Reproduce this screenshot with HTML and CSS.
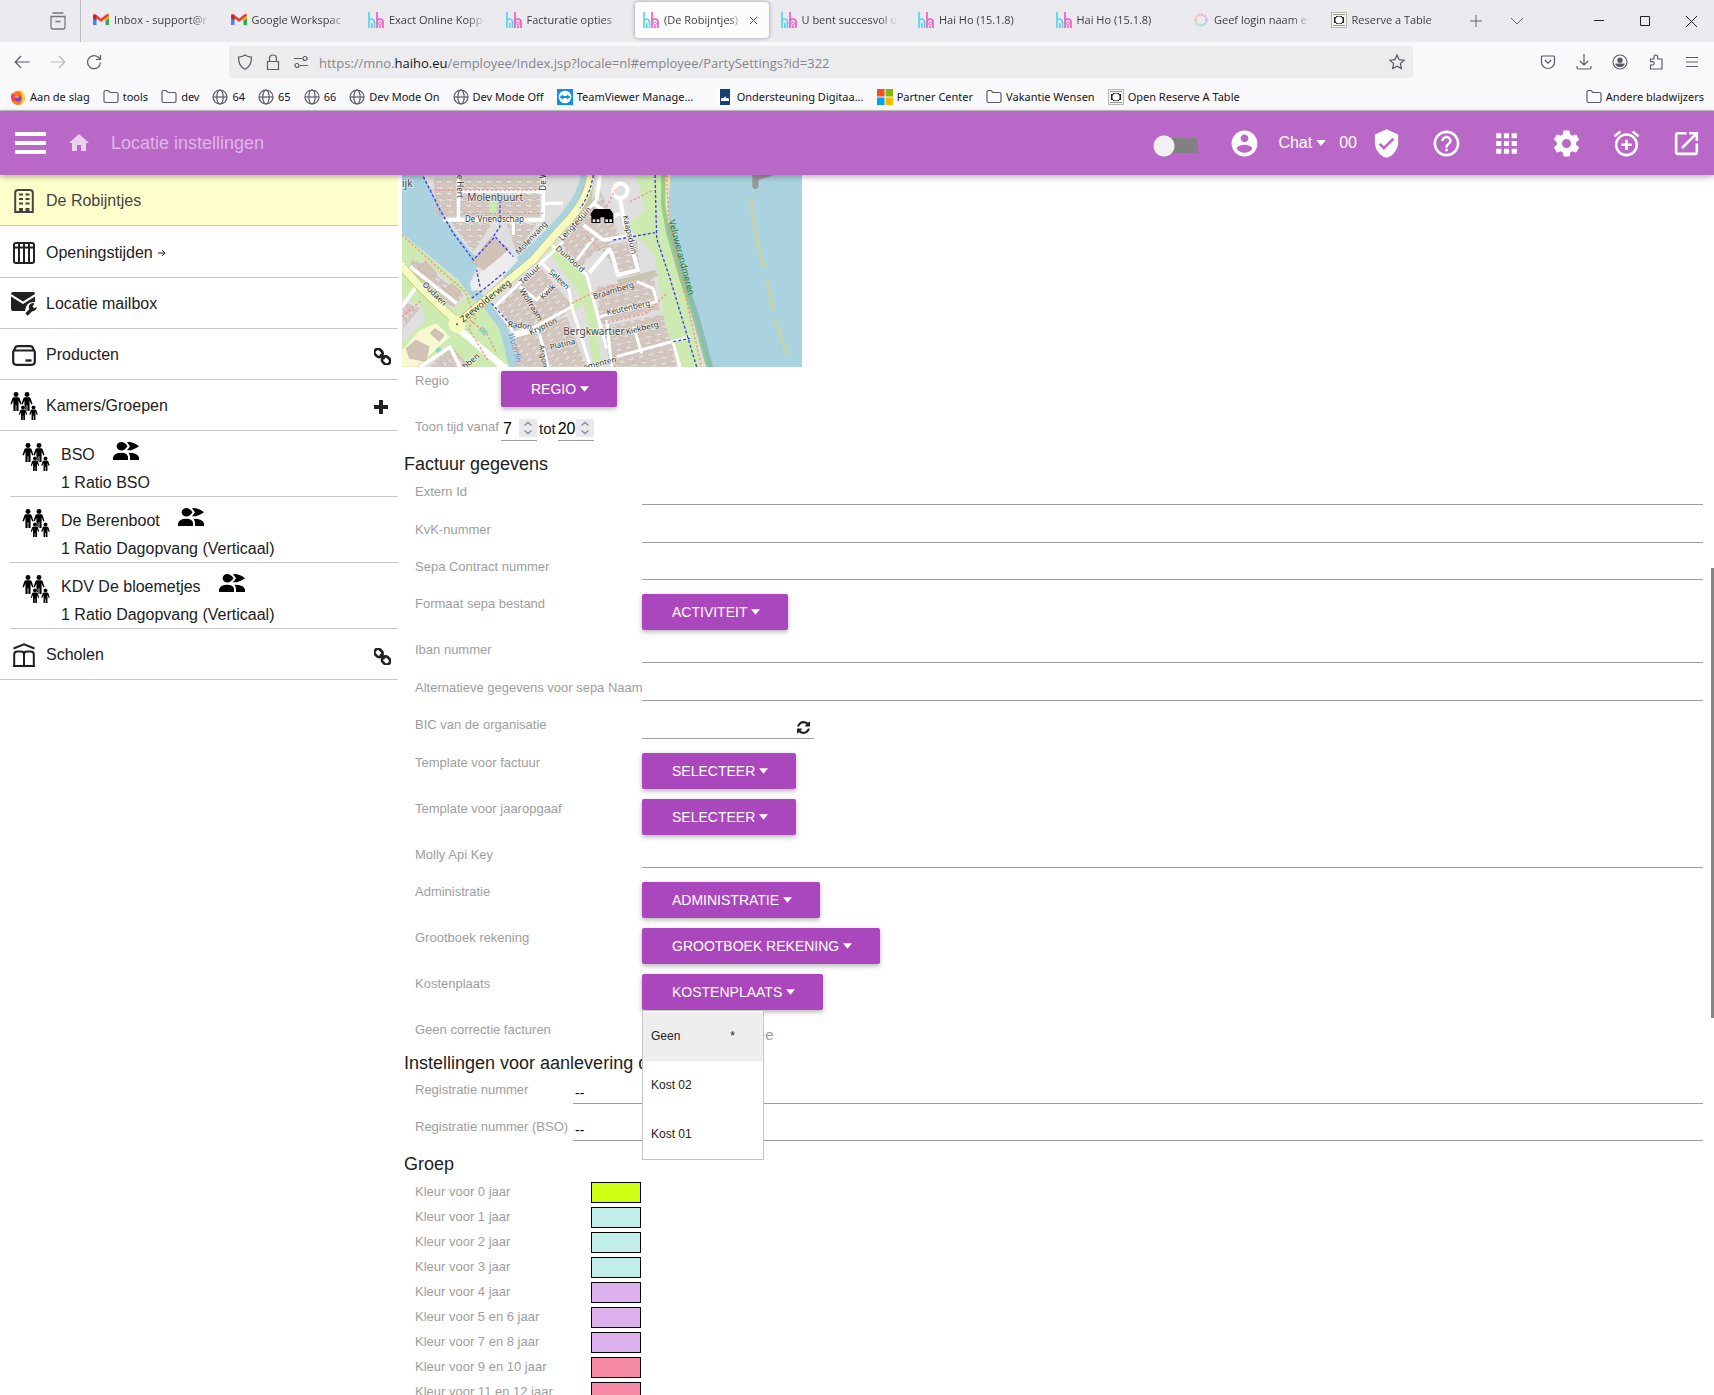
FILE: index.html
```html
<!DOCTYPE html>
<html lang="nl">
<head>
<meta charset="utf-8">
<title>Locatie instellingen</title>
<link rel="stylesheet" href="styles.css">
</head>
<body>
<svg class="sprite" aria-hidden="true">
  <symbol id="gmail" viewBox="0 0 16 16"><path d="M0 4v9h3.500V6z" fill="#4285f4"/><path d="M16 4v9h-3.500V6z" fill="#34a853"/><path d="M12.500 3.500 16 3v3l-3.500 3z" fill="#fbbc04"/><path d="M0 3.500C0 2 2 1.700 3.200 2.700L8 6.500l4.800-3.800C14 1.700 16 2 16 3.500L8 10z" fill="#ea4335"/><path d="M0 3.500v2.300l3.500 2.800V3z" fill="#c5221f"/></symbol>
  <symbol id="haiho" viewBox="0 0 16 16"><path d="M1 0v16M1 10q0-3 2.500-3T6.500 10v6M3.800 16v-5" fill="none" stroke="#52d6f2" stroke-width="1.700"/><path d="M9 0v16M9 10q0-3 3-3t3 3v6M12 16v-2" fill="none" stroke="#f25cc0" stroke-width="1.700"/><circle cx="12" cy="11.500" r="1.500" fill="none" stroke="#f25cc0"/></symbol>
  <symbol id="table" viewBox="0 0 16 16"><path fill="#b9b7ae" d="M0 0h16v16H0z"/><path fill="#f3f3ee" d="M1 1h14v14H1z"/><path fill="#222" d="M3 4h10v8H3z"/><path fill="#999" d="M2 2h12v1H2zM2 13h12v1H2z"/><circle cx="8" cy="8" r="3.600" fill="#fff"/><path fill="#fff" d="M3 4h2v1H3zM11 4h2v1h-2zM3 11h2v1H3zM11 11h2v1h-2z"/></symbol>
  <symbol id="folder" viewBox="0 0 16 16"><path d="M1 3q0-1.500 1.500-1.500H5l2 2h6.500Q15 3.500 15 5v7q0 1.500-1.500 1.500h-11Q1 13.500 1 12z" fill="none" stroke="#5b5b66" stroke-width="1.200"/></symbol>
  <symbol id="globe" viewBox="0 0 16 16"><g fill="none" stroke="#5b5b66" stroke-width="1.200"><circle cx="8" cy="8" r="7"/><ellipse cx="8" cy="8" rx="3.200" ry="7"/><path d="M1 8h14"/></g></symbol>
  <symbol id="caret" viewBox="0 0 8 5"><path d="M0 0h8L4 5z" fill="currentColor"/></symbol>
  <symbol id="person" viewBox="0 0 12 20"><circle cx="6" cy="2.600" r="2.600"/><path d="M4 5.500h4q1.500 0 2 1.500l1.800 5.500-1.300.6L8.700 9v11H6.400v-6h-.8v6H3.300V9l-1.800 4.100-1.300-.6L2 7q.5-1.500 2-1.500z"/></symbol>
  <symbol id="family" viewBox="0 0 28 28"><use href="#person" x="0" y="0" width="12" height="19"/><use href="#person" x="11" y="0" width="12" height="19"/><g stroke="#fff" stroke-width="1.500"><use href="#person" x="8.500" y="13.500" width="9" height="14.500"/><use href="#person" x="19" y="13.500" width="9" height="14.500"/></g><use href="#person" x="8.500" y="13.500" width="9" height="14.500"/><use href="#person" x="19" y="13.500" width="9" height="14.500"/></symbol>
  <symbol id="duo" viewBox="0 0 26 18"><path d="M3.500 4.200Q4.500 0 8.500 0q3 0 6 4.200-3 4.300-6 4.300-4 0-5-4.300zM14 .2q5-1 12 4-7 5-12 4l3-4zM0 18v-2.500Q1 11 8.500 10.800q5.500 0 6.500 4V18zM15.500 10.800q9.500 0 10.500 4.700V18h-9v-3q0-2-1.500-4.200z"/></symbol>
  <symbol id="chain" viewBox="0 0 16 16"><g fill="none" stroke="currentColor" stroke-width="2.500" transform="rotate(45 8 8)"><rect x="-1" y="5" width="8" height="6.500" rx="3"/><rect x="9" y="5" width="8" height="6.500" rx="3"/><path d="M5 8h6"/></g></symbol>
  <symbol id="updown" viewBox="0 0 18 18"><path d="M0 0h18v18H0z" fill="#e9e9ed"/><path d="m5.500 6.500 3.500-3 3.500 3M5.500 11.500l3.500 3 3.500-3" fill="none" stroke="#8f8f9d" stroke-width="1.500"/></symbol>
</svg>

<header class="browser">
  <div class="tabstrip">
    <button class="recent" aria-label="Recent"><svg width="16" height="18" viewBox="0 0 16 18"><g fill="none" stroke="#77777f" stroke-width="1.300"><path d="M2.500 1h11M1 4.500h14V15q0 2-2 2H3q-2 0-2-2zM5.500 9.500h5"/></g></svg></button>
    <nav class="tabs">
      <a class="tab" href="#"><svg class="fav"><use href="#gmail"/></svg><span>Inbox - support@r</span></a>
      <a class="tab" href="#"><svg class="fav"><use href="#gmail"/></svg><span>Google Workspac</span></a>
      <a class="tab" href="#"><svg class="fav"><use href="#haiho"/></svg><span>Exact Online Kopp</span></a>
      <a class="tab" href="#"><svg class="fav"><use href="#haiho"/></svg><span>Facturatie opties</span></a>
      <a class="tab active" href="#"><svg class="fav"><use href="#haiho"/></svg><span>(De Robijntjes)</span><svg class="x" viewBox="0 0 10 10"><path d="m1 1 8 8M9 1 1 9" stroke="#444" fill="none"/></svg></a>
      <a class="tab" href="#"><svg class="fav"><use href="#haiho"/></svg><span>U bent succesvol u</span></a>
      <a class="tab" href="#"><svg class="fav"><use href="#haiho"/></svg><span>Hai Ho (15.1.8)</span></a>
      <a class="tab" href="#"><svg class="fav"><use href="#haiho"/></svg><span>Hai Ho (15.1.8)</span></a>
      <a class="tab" href="#"><svg class="fav" viewBox="0 0 16 16"><g fill="none" stroke-width="2.500" stroke-dasharray="2 1" opacity=".6"><path d="M8 2.500A5.500 5.500 0 0 1 13.500 8" stroke="#e88be0"/><path d="M13.500 8A5.500 5.500 0 0 1 8 13.500" stroke="#8fb4f0"/><path d="M8 13.500A5.500 5.500 0 0 1 2.500 8" stroke="#8fdc9c"/><path d="M2.500 8A5.500 5.500 0 0 1 8 2.500" stroke="#f2a08a"/></g></svg><span>Geef login naam e</span></a>
      <a class="tab" href="#"><svg class="fav"><use href="#table"/></svg><span>Reserve a Table</span></a>
    </nav>
    <button class="newtab" aria-label="Nieuw tabblad"><svg width="12" height="12"><path d="M6 0v12M0 6h12" stroke="#666"/></svg></button>
    <button class="alltabs" aria-label="Alle tabbladen"><svg width="12" height="8"><path d="m0 1 6 6 6-6" fill="none" stroke="#666"/></svg></button>
    <div class="winbtns">
      <button aria-label="Minimaliseren"><svg width="10" height="10"><path d="M0 4.500h10" stroke="#222"/></svg></button>
      <button aria-label="Maximaliseren"><svg width="10" height="10"><path d="M.5.5h9v9h-9z" fill="none" stroke="#222"/></svg></button>
      <button aria-label="Sluiten"><svg width="11" height="11"><path d="m0 0 11 11M11 0 0 11" stroke="#222"/></svg></button>
    </div>
  </div>

  <div class="toolbar">
    <button class="tool" aria-label="Terug"><svg viewBox="0 0 16 16"><path d="M15.500 8H1.500M7 2 1.200 8 7 14"/></svg></button>
    <button class="tool dim" aria-label="Vooruit"><svg viewBox="0 0 16 16"><path d="M.5 8h14M9 2l5.800 6L9 14"/></svg></button>
    <button class="tool" aria-label="Vernieuwen"><svg viewBox="0 0 16 16"><path d="M14.500 8.500A6.500 6.500 0 1 1 12 3l2.500 2.300M14.500 1v4.500H10"/></svg></button>
    <div class="urlbar">
      <svg viewBox="0 0 16 16"><path d="M8 1c2 1.500 4 2 6.500 2.200C14.500 9 13 13 8 15.200 3 13 1.500 9 1.500 3.200 4 3 6 2.500 8 1z"/></svg>
      <svg viewBox="0 0 16 16"><path d="M2.500 7.500h11v8h-11zM4.500 7V4.500a3.500 3.500 0 0 1 7 0V7"/></svg>
      <svg viewBox="0 0 16 16"><path d="M1 4.500h8M15 11.500H7"/><circle cx="12" cy="4.500" r="2"/><circle cx="4" cy="11.500" r="2"/></svg>
      <p class="url">https://mno.<b>haiho.eu</b>/employee/Index.jsp?locale=nl#employee/PartySettings?id=322</p>
      <svg viewBox="0 0 16 16"><path d="m8 1 2.100 4.600 5 .6-3.700 3.400 1 5L8 12.200l-4.400 2.400 1-5L.9 6.200l5-.6z"/></svg>
    </div>
    <div class="tools">
      <button class="tool" aria-label="Pocket"><svg viewBox="0 0 16 16"><path d="M2.500 2h11q1 0 1 1v5a6.500 6.500 0 0 1-13 0V3q0-1 1-1zM4.800 6 8 9.200 11.200 6"/></svg></button>
      <button class="tool" aria-label="Downloads"><svg viewBox="0 0 16 16"><path d="M8 0v11M3.800 7 8 11l4.200-4M1 12v1.500Q1 15 2.500 15h11q1.500 0 1.500-1.500V12"/></svg></button>
      <button class="tool" aria-label="Account"><svg viewBox="0 0 16 16"><circle cx="8" cy="8" r="7"/><path d="M8 4a2.200 2.200 0 1 1 0 4.400A2.200 2.200 0 0 1 8 4zM4 10h8q-1 2.500-4 2.500T4 10z" fill="#5b5b66"/></svg></button>
      <button class="tool" aria-label="Extensies"><svg viewBox="0 0 16 16"><path d="M2.500 5H6V2.800a1.800 1.800 0 0 1 3.600 0V5h4.400v10H2.500v-4h2a1.600 1.600 0 0 0 0-3.300h-2z"/></svg></button>
      <button class="tool" aria-label="Menu"><svg viewBox="0 0 16 16"><path d="M2 3.500h12M2 8h12M2 12.500h12"/></svg></button>
    </div>
  </div>

  <nav class="bookmarks">
    <a href="#"><svg viewBox="0 0 16 16"><circle cx="8" cy="9" r="7" fill="#ff7a1a"/><path d="M9 0c2 2 6 4 6 9a7 7 0 0 1-6 7c4-3 5-8 0-16z" fill="#ffd23a"/><path d="M1.500 4 4 6l3-.5L4 13Q0 10 1.500 4z" fill="#ff3b5c"/><circle cx="8" cy="9.300" r="3.200" fill="#7a42d8"/><path d="M4.500 7q2-2 5 0L8 9H5z" fill="#ff9a2a"/></svg>Aan de slag</a>
    <a href="#"><svg><use href="#folder"/></svg>tools</a>
    <a href="#"><svg><use href="#folder"/></svg>dev</a>
    <a href="#"><svg><use href="#globe"/></svg>64</a>
    <a href="#"><svg><use href="#globe"/></svg>65</a>
    <a href="#"><svg><use href="#globe"/></svg>66</a>
    <a href="#"><svg><use href="#globe"/></svg>Dev Mode On</a>
    <a href="#"><svg><use href="#globe"/></svg>Dev Mode Off</a>
    <a class="capped" href="#"><svg viewBox="0 0 16 16"><path fill="#0e8ee9" d="M0 0h16v16H0z"/><circle cx="8" cy="8" r="6.300" fill="#fff"/><path d="m2.500 8 3.500-2.500V7h4V5.500L13.500 8 10 10.500V9H6v1.500z" fill="#0e8ee9"/></svg>TeamViewer Manage...</a>
    <a class="capped" href="#"><svg viewBox="0 0 16 16"><path fill="#fff" d="M0 0h16v16H0z"/><path fill="#154273" d="M3 0h10v16H3z"/><path fill="#fff" d="M4 12V9.500l1.500-.5L7 9l1-2 1 2 1.500 0 1.500.5V12z"/></svg>Ondersteuning Digitaa...</a>
    <a href="#"><svg viewBox="0 0 16 16"><path fill="#f25022" d="M0 0h7.500v7.500H0z"/><path fill="#7fba00" d="M8.500 0H16v7.500H8.500z"/><path fill="#00a4ef" d="M0 8.500h7.500V16H0z"/><path fill="#ffb900" d="M8.500 8.500H16V16H8.500z"/></svg>Partner Center</a>
    <a href="#"><svg><use href="#folder"/></svg>Vakantie Wensen</a>
    <a href="#"><svg><use href="#table"/></svg>Open Reserve A Table</a>
    <a class="other" href="#"><svg><use href="#folder"/></svg>Andere bladwijzers</a>
  </nav>
</header>

<div class="appbar">
  <button class="burger" aria-label="Menu"><svg width="31" height="22"><path d="M0 2h31M0 11h31M0 20h31" stroke="#fff" stroke-width="4"/></svg></button>
  <a class="home" href="#" aria-label="Home"><svg width="24" height="24" viewBox="0 0 24 24"><path fill="currentColor" d="M10 20v-6h4v6h5v-8h3L12 3 2 12h3v8z"/></svg></a>
  <h1>Locatie instellingen</h1>
  <label class="switch"><input type="checkbox" aria-label="Modus"></label>
  <a class="mi" href="#" aria-label="Account"><svg viewBox="0 0 24 24"><path d="M12 2C6.480 2 2 6.480 2 12s4.480 10 10 10 10-4.480 10-10S17.520 2 12 2zm0 3c1.660 0 3 1.340 3 3s-1.340 3-3 3-3-1.340-3-3 1.340-3 3-3zm0 14.200c-2.500 0-4.710-1.280-6-3.220.03-1.990 4-3.080 6-3.080 1.990 0 5.970 1.090 6 3.080-1.290 1.940-3.500 3.220-6 3.220z"/></svg></a>
  <button class="chat">Chat <svg width="10" height="6"><use href="#caret"/></svg></button>
  <span class="count">00</span>
  <nav class="actions">
    <a class="mi" href="#" aria-label="Beveiliging"><svg viewBox="0 0 24 24"><path d="M12 1L3 5v6c0 5.550 3.840 10.740 9 12 5.160-1.260 9-6.450 9-12V5l-9-4zm-2 16l-4-4 1.410-1.410L10 14.170l6.590-6.590L18 9l-8 8z"/></svg></a>
    <a class="mi" href="#" aria-label="Help"><svg viewBox="0 0 24 24"><path d="M11 18h2v-2h-2v2zm1-16C6.480 2 2 6.480 2 12s4.480 10 10 10 10-4.480 10-10S17.520 2 12 2zm0 18c-4.410 0-8-3.590-8-8s3.590-8 8-8 8 3.590 8 8-3.590 8-8 8zm0-14c-2.210 0-4 1.790-4 4h2c0-1.100.9-2 2-2s2 .9 2 2c0 2-3 1.750-3 5h2c0-2.250 3-2.500 3-5 0-2.210-1.790-4-4-4z"/></svg></a>
    <a class="mi" href="#" aria-label="Apps"><svg viewBox="0 0 24 24"><path d="M4 8h4V4H4v4zm6 12h4v-4h-4v4zm-6 0h4v-4H4v4zm0-6h4v-4H4v4zm6 0h4v-4h-4v4zm6-10v4h4V4h-4zm-6 4h4V4h-4v4zm6 6h4v-4h-4v4zm0 6h4v-4h-4v4z"/></svg></a>
    <a class="mi" href="#" aria-label="Instellingen"><svg viewBox="0 0 24 24"><path d="M19.430 12.980c.04-.32.07-.64.07-.98s-.03-.66-.07-.98l2.110-1.650c.19-.15.24-.42.12-.64l-2-3.460c-.12-.22-.39-.3-.61-.22l-2.490 1c-.52-.4-1.080-.73-1.690-.98l-.38-2.650C14.460 2.180 14.250 2 14 2h-4c-.25 0-.46.18-.49.42l-.38 2.650c-.61.25-1.170.59-1.690.98l-2.490-1c-.23-.09-.49 0-.61.22l-2 3.460c-.13.22-.07.49.12.64l2.110 1.650c-.04.32-.07.65-.07.98s.03.66.07.98l-2.110 1.650c-.19.15-.24.42-.12.64l2 3.460c.12.22.39.3.61.22l2.490-1c.52.4 1.080.73 1.690.98l.38 2.650c.03.24.24.42.49.42h4c.25 0 .46-.18.49-.42l.38-2.650c.61-.25 1.170-.59 1.690-.98l2.490 1c.23.09.49 0 .61-.22l2-3.460c.12-.22.07-.49-.12-.64l-2.110-1.650zM12 15.500c-1.930 0-3.500-1.570-3.500-3.500s1.570-3.500 3.500-3.500 3.500 1.570 3.500 3.500-1.570 3.500-3.500 3.500z"/></svg></a>
    <a class="mi" href="#" aria-label="Herinnering"><svg viewBox="0 0 24 24"><path d="M7.880 3.390L6.600 1.860 2 5.710l1.290 1.530 4.590-3.850zM22 5.720l-4.600-3.860-1.290 1.530 4.600 3.860L22 5.720zM12 4c-4.970 0-9 4.030-9 9s4.020 9 9 9c4.970 0 9-4.030 9-9s-4.030-9-9-9zm0 16c-3.870 0-7-3.130-7-7s3.130-7 7-7 7 3.130 7 7-3.130 7-7 7zm1-11h-2v3H8v2h3v3h2v-3h3v-2h-3V9z"/></svg></a>
    <a class="mi" href="#" aria-label="Openen"><svg viewBox="0 0 24 24"><path d="M19 19H5V5h7V3H5c-1.110 0-2 .9-2 2v14c0 1.100.89 2 2 2h14c1.100 0 2-.9 2-2v-7h-2v7zM14 3v2h3.590l-9.830 9.830 1.410 1.410L19 6.410V10h2V3h-7z"/></svg></a>
  </nav>
</div>

<div class="body">
  <nav class="side">
    <a class="item current" href="#"><span class="ico"><svg width="20" height="24" viewBox="0 0 20 24"><path d="M1.200 23V4q0-3 3-3h11.600q3 0 3 3v19z" fill="none" stroke="currentColor" stroke-width="2"/><path d="M5 5.500h4M11.500 5.500h4M5 10h4M11.500 10h4M5 14.500h4M11.500 14.500h4" stroke="currentColor" stroke-width="2"/><path d="M5 19h4v4H5zM11.500 19h4v4h-4z" fill="currentColor"/></svg></span>De Robijntjes</a>
    <a class="item hours" href="#"><span class="ico"><svg width="22" height="22" viewBox="0 0 22 22"><rect x="1" y="1" width="20" height="20" rx="2" fill="none" stroke="currentColor" stroke-width="2"/><path d="M1 5.500h20M6 1v20M11 1v20M16 1v20" stroke="currentColor" stroke-width="2"/></svg></span>Openingstijden <svg class="arrow" width="8" height="8" viewBox="0 0 8 8"><path d="M0 4h7M4 1l3 3-3 3" fill="none" stroke="currentColor"/></svg></a>
    <a class="item" href="#"><span class="ico"><svg width="26" height="24" viewBox="0 0 26 24"><path d="M0 2q0-2 2-2h20q2 0 2 2l-12 7.500zM0 4.500l12 7.500 12-7.500V10q-9-1-10 9H2q-2 0-2-2z" fill="currentColor"/><path d="m15.500 22.500 6-6" stroke="currentColor" stroke-width="3.500"/><path d="M23.500 11.500a4 4 0 1 0 2.300 3.500l-2.600 1.300-1.700-1.800z" fill="currentColor"/></svg></span>Locatie mailbox</a>
    <a class="item" href="#"><span class="ico"><svg width="24" height="21" viewBox="0 0 24 21"><path d="M1.200 7 3.500 2.300Q4 1.200 5.500 1.200h13q1.500 0 2 1.100L22.800 7v9.500q0 3.300-3 3.300H4.200q-3 0-3-3.300zM2 5.500h20" fill="none" stroke="currentColor" stroke-width="2.200"/><path d="M13.500 15.500h6" stroke="currentColor" stroke-width="2.400"/></svg></span>Producten<svg class="end" width="17" height="17"><use href="#chain"/></svg></a>
    <a class="item" href="#"><span class="ico"><svg width="28" height="28"><use href="#family"/></svg></span>Kamers/Groepen<svg class="end plus" width="17" height="15"><path d="M7 0v14M0 7h14" stroke="currentColor" stroke-width="4"/></svg></a>
    <ul class="rooms">
      <li><a href="#"><svg class="fam" width="28" height="28"><use href="#family"/></svg><span class="name">BSO</span><svg class="duo" width="26" height="18"><use href="#duo"/></svg><span class="ratio">1 Ratio BSO</span></a></li>
      <li><a href="#"><svg class="fam" width="28" height="28"><use href="#family"/></svg><span class="name">De Berenboot</span><svg class="duo" width="26" height="18"><use href="#duo"/></svg><span class="ratio">1 Ratio Dagopvang (Verticaal)</span></a></li>
      <li><a href="#"><svg class="fam" width="28" height="28"><use href="#family"/></svg><span class="name">KDV De bloemetjes</span><svg class="duo" width="26" height="18"><use href="#duo"/></svg><span class="ratio">1 Ratio Dagopvang (Verticaal)</span></a></li>
    </ul>
    <a class="item" href="#"><span class="ico"><svg width="22" height="24" viewBox="0 0 22 24"><path d="M.5 5.500 11 1.300l10.500 4.200" fill="none" stroke="currentColor" stroke-width="2"/><path d="M1.200 23V11.500q0-3 3-3H8q3 0 3 3V23zM11 23V11.500q0-3 3-3h3.800q3 0 3 3V23z" fill="none" stroke="currentColor" stroke-width="2"/><path d="M0 23h22" stroke="currentColor" stroke-width="2"/></svg></span>Scholen<svg class="end" width="17" height="17"><use href="#chain"/></svg></a>
  </nav>

  <main class="main">
    <svg class="map" viewBox="6 15 1200 576" role="img" aria-label="Kaart">
      <defs>
        <pattern id="houses" width="30" height="36" patternUnits="userSpaceOnUse"><path d="M2 3h8v-2h10v3h9v10h-11v3H9v-3H2zM3 22h14v-2h11v11H17v3H3z" fill="#d6c8be" stroke="#bda99d" stroke-width="1.500"/></pattern>
        <pattern id="housesA" href="#houses" patternTransform="rotate(-42)"/>
        <pattern id="housesB" href="#houses" patternTransform="rotate(-14)"/>
        <pattern id="housesC" href="#houses" patternTransform="rotate(40)"/>
      </defs>
      <path fill="#e0dfdf" d="M6 15h1200v576H6z"/>
      <path fill="#cdebb0" d="M6 190 100 270l130 110 60 60 60 150H6z"/>
      <path fill="#e0dfdf" d="M6 380l60 30 10 40-70 70zM30 280l40-10 130 110-40 40zM70 591l70-70 60 70z"/>
      <path fill="#f7f7d2" d="m60 480 50-20 40 40-100 90H6v-50z"/>
      <path fill="#aad3df" d="M6 15h62l50 90 45 80 50 60 28 25-28 60-8 25 20 40-50-65L6 190z"/>
      <path fill="none" stroke="#aad3df" stroke-width="26" d="M556 15q-10 60-60 120T370 262l-60 60M205 350l60 60 45 60 30 121"/>
      <path fill="url(#houses)" d="M100 25h320v115H110zM150 155l130 0-60 90zM320 160h90l-60 90z"/>
      <path fill="url(#housesA)" d="M480 210 600 60l60 140-90 60-40 50zM280 410l140-120 100 120-60 50-130 20zM350 500l150-60 60 150H350z"/>
      <path fill="url(#housesB)" d="M590 350l170-30 20 100-180 40zM610 470l190-40 30 160H630zM600 230l110-20 10 100-60 10z"/>
      <path fill="url(#housesC)" d="M10 395l50 20-50 60zM90 591l60-70 60 70zM40 265l150 110-30 40L20 300z"/>
      <g fill="#d1c2b8" stroke="#b9a79a"><path d="m215 275 60-75 50 35-60 75zM18 535l30-25 40 20-10 45-50-10zM125 365l30-25 30 25-30 30zM52 290l25-18 35 40-25 15zM90 490l15-15 28 20-15 20z"/></g>
      <path fill="#ededed" d="m210 335 110-90 35 25-80 85-60 8z"/>
      <path fill="#c8c5b0" d="m650 330 115-30 8 18-110 30zM555 30l25-15-5 110-40 30-20-10z"/>
      <path fill="#cdebb0" d="M708 15h82l2 110 12 70 46 150 55 246h-60l-50-130-30-200-50-60-30-40 50-40zM460 215l100 90 20 60 25 226h-25l-30-200-70-100-40-50zM268 92h22v40h-22zM510 400l60-30v20l-60 40z"/>
      <g fill="#88dcc0"><path d="m235 480 12-12 18 18-12 12zM105 540l12-10 10 12-12 10z"/></g>
      <path fill="#f8eaa8" d="M785 15h27l-9 50 1 60 14 90-12-20-14-80z"/>
      <path fill="#aad3df" d="M812 15h394v576H928l-43-151-35-110-38-150-8-70z"/>
      <path fill="none" stroke="#7cc47c" stroke-width="13" opacity=".75" d="M790 15v90l14 80 40 140 40 120 42 150"/>
      <path fill="none" stroke="#86b8b0" stroke-width="13" opacity=".8" d="m806 160 42 150 42 125 44 160"/>
      <g fill="none" stroke="#999" stroke-width="18" stroke-linecap="round"><path d="M1066 20v28M1066 24l45-15"/></g>
      <g fill="none" stroke="#c5d3a6" stroke-width="10" stroke-linecap="round"><path d="M1054 90q10 120 40 200M1102 330l16 90M1126 450l34 100"/></g>
      <g fill="none" stroke="#fff" stroke-width="12" stroke-linejoin="round">
        <path d="M6 280l50 60-50 70M30 290l140 110M60 591l90-60 30 60M180 480l150 120" stroke-width="11"/>
        <path d="M180 480 320 600" stroke-width="19"/>
        <path d="M130 150h45l255 0V15M175 15v135M180 65h245M428 100h60M340 150v45" stroke-width="10"/>
        <path d="M590 90l10-75M660 85q-25-5-20-25 8-25 28-18 20 8 12 30-8 14-20 13l12 65 42 150-60 15-18-62-8-15-60 70M550 165l60 45 90-15M580 100l60 40M660 130l-20 10"/>
        <path d="M490 215 285 410l60 80 60-20 112-60-10-50-80-80M360 350l50 40 40-40M517 415l55 176M455 225l105 90 60 220M530 270l50-65M600 440l170-45-10-40-50-20M620 450l15 140M650 560l220-60M340 500l75-20M820 520l20 70M700 470l25 80M415 480l30 110M590 90l-110 120" stroke-width="9"/>
      </g>
      <g fill="none" stroke="#b9b96f" stroke-width="26"><path d="M572 15q-5 70-70 140T400 270l-85 70-140 120L60 350 6 290"/></g>
      <g fill="none" stroke="#f7fabf" stroke-width="23"><path d="M572 15q-5 70-70 140T400 270l-85 70-140 120L60 350 6 290"/></g>
      <circle cx="171" cy="463" r="26" fill="#f7fabf"/><circle cx="171" cy="463" r="3" fill="#555"/>
      <g fill="none" stroke="#fa9088" stroke-width="4" stroke-dasharray="7 6"><path d="M6 195l110 100 80 70 30 80-20 30 60 100M90 60h330M190 130h240M690 95l70-35M800 15l5 120 30 150 70 306M610 460l130-30 60-60M515 400l60-30 90-30M620 110l25-50M560 200l40 40M6 440l60-50M210 450l50 40 30 60"/></g>
      <g fill="none" stroke="#3d3df0" stroke-width="4" stroke-dasharray="9 6"><path d="M70 20l50 100 40 70 60 80 65-70 55 60M300 90v80l-20 30M765 15l5 190 40 120 80 266M640 210l125-22M820 515l50-10M240 350l-10-50M275 400l70 80M215 385l40-30 60-50M580 15q-10 60-40 100"/></g>
      <g class="roadtext">
        <text x="6" y="50" class="place">ijk</text>
        <text x="202" y="93" class="place">Molenbuurt</text>
        <text x="195" y="156">De Vriendschap</text>
        <text x="490" y="495" class="place">Bergkwartier</text>
        <text transform="translate(170 14) rotate(90)">e Hert</text>
        <text transform="translate(438 62) rotate(-90)">De W</text>
        <text transform="translate(357 255) rotate(-47)">Molenvang</text>
        <text transform="translate(487 214) rotate(-47)">Lengteduin</text>
        <text transform="translate(668 138) rotate(77)">Kaapsduin</text>
        <text transform="translate(465 238) rotate(41)">Duinoord</text>
        <text transform="translate(368 345) rotate(-44)">Telluur</text>
        <text transform="translate(445 308) rotate(44)">Seleen</text>
        <text transform="translate(430 390) rotate(-45)">Kwik</text>
        <text transform="translate(358 362) rotate(58)">Wolfraam</text>
        <text transform="translate(66 346) rotate(44)">Oudaen</text>
        <text transform="translate(190 458) rotate(-39)" class="main-road">Zeewolderweg</text>
        <text transform="translate(323 470) rotate(6)">Radon</text>
        <text transform="translate(392 496) rotate(-25)">Krypton</text>
        <text transform="translate(416 526) rotate(80)">Argon</text>
        <text transform="translate(452 540) rotate(-14)">Platina</text>
        <text transform="translate(582 388) rotate(-17)">Braamberg</text>
        <text transform="translate(622 436) rotate(-13)">Keutenberg</text>
        <text transform="translate(680 494) rotate(-14)">Kiekberg</text>
        <text transform="translate(552 600) rotate(-14)">ementen</text>
        <text transform="translate(196 598) rotate(-40)">bben</text>
        <text transform="translate(325 492) rotate(74)" class="waterway">Waterlin</text>
        <text transform="translate(806 152) rotate(75)" class="nature">Veluwerandmeren</text>
      </g>
      <path d="M582 117h48l10 14v28h-27v-17h-12v17h-27v-22h-2v-6z"/>
      <path fill="#e0dfdf" d="M578 148h8v8h-8zM590 148h8v8h-8zM616 148h8v8h-8zM628 148h8v8h-8z"/>
    </svg>

    <form class="form">
      <div class="rows top">
        <span class="lbl">Regio</span>
        <div><button type="button" class="btn">REGIO<svg><use href="#caret"/></svg></button></div>
        <label class="lbl" for="van">Toon tijd vanaf</label>
        <div class="times">
          <span class="num"><input id="van" type="number" value="7"><svg><use href="#updown"/></svg></span>
          <label for="tot">tot</label>
          <span class="num"><input id="tot" type="number" value="20"><svg><use href="#updown"/></svg></span>
        </div>
      </div>

      <h2>Factuur gegevens</h2>
      <div class="rows invoice">
        <label class="lbl" for="f1">Extern Id</label><input class="line" id="f1" type="text">
        <label class="lbl" for="f2">KvK-nummer</label><input class="line" id="f2" type="text">
        <label class="lbl" for="f3">Sepa Contract nummer</label><input class="line" id="f3" type="text">
        <span class="lbl">Formaat sepa bestand</span><div><button type="button" class="btn">ACTIVITEIT<svg><use href="#caret"/></svg></button></div>
        <label class="lbl" for="f4">Iban nummer</label><input class="line" id="f4" type="text">
        <label class="lbl" for="f5">Alternatieve gegevens voor sepa Naam</label><input class="line" id="f5" type="text">
        <label class="lbl" for="f6">BIC van de organisatie</label>
        <div class="bic"><input class="line" id="f6" type="text"><button type="button" aria-label="Vernieuw BIC"><svg width="13" height="13" viewBox="128 128 1536 1536"><path fill="#212121" d="M1639 1056q0 5-1 7-64 268-268 434.500t-478 166.500q-146 0-282.500-55t-243.500-157l-129 129q-19 19-45 19t-45-19-19-45v-448q0-26 19-45t45-19h448q26 0 45 19t19 45-19 45l-137 137q71 66 161 102t187 36q134 0 250-65t186-179q11-17 53-117 8-23 30-23h192q13 0 22.500 9.500t9.500 22.500zm25-800v448q0 26-19 45t-45 19h-448q-26 0-45-19t-19-45 19-45l138-138q-148-137-349-137-134 0-250 65t-186 179q-11 17-53 117-8 23-30 23h-199q-13 0-22.500-9.500t-9.500-22.500v-7q65-268 270-434.500t480-166.500q146 0 284 55.500t245 156.500l130-129q19-19 45-19t45 19 19 45z"/></svg></button></div>
        <span class="lbl">Template voor factuur</span><div><button type="button" class="btn">SELECTEER<svg><use href="#caret"/></svg></button></div>
        <span class="lbl">Template voor jaaropgaaf</span><div><button type="button" class="btn">SELECTEER<svg><use href="#caret"/></svg></button></div>
        <label class="lbl" for="f7">Molly Api Key</label><input class="line" id="f7" type="text">
        <span class="lbl">Administratie</span><div><button type="button" class="btn">ADMINISTRATIE<svg><use href="#caret"/></svg></button></div>
        <span class="lbl">Grootboek rekening</span><div><button type="button" class="btn">GROOTBOEK REKENING<svg><use href="#caret"/></svg></button></div>
        <span class="lbl">Kostenplaats</span>
        <div class="drop"><button type="button" class="btn">KOSTENPLAATS<svg><use href="#caret"/></svg></button>
          <ul class="menu">
            <li><button type="button" class="chosen">Geen<span>*</span></button></li>
            <li><button type="button">Kost 02</button></li>
            <li><button type="button">Kost 01</button></li>
          </ul>
        </div>
        <label class="lbl" for="corr">Geen correctie facturen</label>
        <div class="yesno"><input id="corr" type="checkbox"><span>Nee</span></div>
      </div>

      <h2>Instellingen voor aanlevering data</h2>
      <div class="rows registration">
        <label class="lbl" for="r1">Registratie nummer</label><input class="line" id="r1" type="text" value="--">
        <label class="lbl" for="r2">Registratie nummer (BSO)</label><input class="line" id="r2" type="text" value="--">
      </div>

      <h2>Groep</h2>
      <div class="rows colours">
        <label class="lbl" for="k0">Kleur voor 0 jaar</label><input id="k0" type="color" value="#ccff11">
        <label class="lbl" for="k1">Kleur voor 1 jaar</label><input id="k1" type="color" value="#c2eee9">
        <label class="lbl" for="k2">Kleur voor 2 jaar</label><input id="k2" type="color" value="#c2eee9">
        <label class="lbl" for="k3">Kleur voor 3 jaar</label><input id="k3" type="color" value="#c2eee9">
        <label class="lbl" for="k4">Kleur voor 4 jaar</label><input id="k4" type="color" value="#ddb1ee">
        <label class="lbl" for="k5">Kleur voor 5 en 6 jaar</label><input id="k5" type="color" value="#ddb1ee">
        <label class="lbl" for="k7">Kleur voor 7 en 8 jaar</label><input id="k7" type="color" value="#ddb1ee">
        <label class="lbl" for="k9">Kleur voor 9 en 10 jaar</label><input id="k9" type="color" value="#f78aa7">
        <label class="lbl" for="k11">Kleur voor 11 en 12 jaar</label><input id="k11" type="color" value="#f78aa7">
      </div>
    </form>
    <div class="thumb"></div>
  </main>
</div>
</body>
</html>
```
FILE: styles.css
```css
* { box-sizing: border-box; }

body {
  margin: 0;
  height: 100vh;
  display: flex;
  flex-direction: column;
  overflow: hidden;
  background: #fff;
  color: #212121;
  font: 16px/20px "Liberation Sans", Arial, sans-serif;
}

a { color: inherit; text-decoration: none; }
button { padding: 0; border: 0; background: none; color: inherit; font: inherit; }
ul { margin: 0; padding: 0; list-style: none; }
svg { display: block; flex: none; }
.sprite { position: absolute; width: 0; height: 0; }

/* browser chrome */
.browser {
  flex: none;
  background: #f9f9fb;
  border-bottom: 1px solid #c3c6c3;
  font: 11px/16px "Open Sans", "Noto Sans", sans-serif;
}
.tabstrip { display: flex; height: 42px; background: #eaeaef; color: #3c3c44; }
.recent { width: 81px; padding-left: 50px; border-right: 1px solid #bcbcc2; }
.tabs { flex: 1; display: flex; min-width: 0; padding-left: 2px; }
.tab {
  flex: 1;
  min-width: 0;
  display: flex;
  align-items: center;
  gap: 5px;
  height: 36px;
  margin: 2px;
  padding: 0 8px;
  border-radius: 4px;
}
.tab span {
  flex: 1;
  overflow: hidden;
  white-space: nowrap;
  mask-image: linear-gradient(to right, #000 80%, transparent);
}
.tab.active { background: #fcfcfd; box-shadow: 0 0 4px rgba(0, 0, 0, .35); }
.fav { width: 16px; height: 16px; }
.x { width: 9px; height: 9px; margin: 0 3px 0 0; }
.tabstrip > button, .winbtns button { display: flex; align-items: center; justify-content: center; }
.tabstrip > .recent { justify-content: flex-start; }
.newtab { width: 36px; }
.alltabs { width: 45px; }
.winbtns { display: flex; margin-left: 37px; }
.winbtns button { width: 46px; }

.toolbar { display: flex; align-items: center; height: 40px; padding: 0 4px; }
.tool { width: 36px; height: 32px; display: flex; align-items: center; justify-content: center; }
.toolbar svg { width: 16px; height: 16px; fill: none; stroke: #5b5b66; stroke-width: 1.2; }
.tool.dim { opacity: .4; }
.urlbar {
  flex: 1;
  display: flex;
  align-items: center;
  gap: 12px;
  height: 32px;
  margin: 0 117px;
  padding: 0 8px;
  border-radius: 4px;
  background: #ececee;
}
.url { flex: 1; margin: 0 0 0 -2px; padding-top: 2px; color: #85858c; font-size: 13px; white-space: nowrap; }
.url b { color: #15141a; font-weight: 400; }
.tools { display: flex; }

.bookmarks {
  display: flex;
  align-items: center;
  gap: 13px;
  height: 28px;
  padding: 1px 10px 0;
  color: #15141a;
  font-family: "Noto Sans", sans-serif;
  white-space: nowrap;
}
.bookmarks a { display: flex; align-items: center; gap: 4px; }
.bookmarks svg { width: 16px; height: 16px; }
.bookmarks .capped { min-width: 147px; }
.bookmarks .other { margin-left: auto; }

/* application bar */
.appbar {
  position: relative;
  z-index: 1;
  flex: none;
  display: flex;
  align-items: center;
  height: 64px;
  padding: 0 12px 0 15px;
  background: #ba68c8;
  color: #fff;
  box-shadow: 0 2px 6px rgba(0, 0, 0, .3);
}
.home { margin-left: 21px; color: #ecd0f0; }
h1 { flex: 1; margin: 0 0 0 20px; font-size: 18px; font-weight: 400; line-height: 24px; color: #dfb6e6; }
.switch { display: flex; margin-right: 30px; }
.switch input {
  appearance: none;
  width: 46px;
  height: 22px;
  margin: 6px 0 0;
  border-radius: 11px;
  background:
    radial-gradient(circle at 11px 11px, #f1f1f1 10px, transparent 11px),
    linear-gradient(#818181, #818181) 11px 3px / 34px 15px no-repeat;
}
.mi svg { width: 31px; height: 31px; fill: #fff; }
.chat { display: flex; align-items: center; gap: 4px; margin-left: 18px; }
.count { margin: 0 14px 0 13px; }
.actions { display: flex; gap: 29px; }

/* left column */
.body { flex: 1; display: flex; min-height: 0; }
.side { flex: none; width: 398px; }
.item {
  display: flex;
  align-items: center;
  height: 51px;
  padding-top: 2px;
  border-bottom: 1px solid #c8c8c8;
}
.item.current { background: #ffffcc; color: #444; }
.item.hours { height: 52px; }
.ico { display: flex; justify-content: center; width: 28px; margin: 0 8px 0 10px; }
.arrow { margin-left: 5px; }
.end { margin: 3px 7px 0 auto; }
.rooms { margin-left: 10px; }
.rooms li { height: 66px; border-bottom: 1px solid #c8c8c8; }
.rooms a {
  display: grid;
  grid-template-columns: 28px auto 1fr;
  grid-template-rows: 28px 28px;
  column-gap: 11px;
  align-items: center;
  padding: 10px 0 0 12px;
}
.duo { margin: -8px 0 0 7px; }
.ratio { grid-column: 2 / -1; }
.fam { margin-top: 3px; }

/* settings */
.main { position: relative; flex: 1; min-width: 0; padding: 0 11px 0 4px; overflow: hidden; }
.map { width: 400px; height: 192px; }
.roadtext text {
  font: 24px "Noto Sans", sans-serif;
  fill: #333;
  stroke: #fff;
  stroke-width: 4px;
  stroke-opacity: .7;
  paint-order: stroke;
}
.roadtext .place { font-size: 30px; fill: #444; }
.roadtext .main-road { font-size: 27px; stroke: #f7fabf; }
.roadtext .waterway { font-style: italic; fill: #5a8fc0; stroke: none; }
.roadtext .nature { font-size: 27px; fill: #1c7c2c; stroke: none; }

h2 { margin: 0; padding: 2px 0 0 2px; font-size: 18px; font-weight: 400; line-height: 25px; }
.rows { display: grid; padding-left: 13px; }
.rows.top { grid-template-columns: 86px 1fr; grid-template-rows: 46px 37px; }
.rows.invoice {
  grid-template-columns: 227px 1fr;
  grid-template-rows: 38px 37px 37px 46px 38px 37px 38px 46px 46px 37px 46px 46px 46px 34px;
}
.rows.registration { grid-template-columns: 158px 1fr; grid-auto-rows: 37px; }
.rows.colours { grid-template-columns: 176px 50px; grid-auto-rows: 25px; padding-top: 3px; }
.lbl { padding-top: 4px; color: #9e9e9e; font-size: 13px; white-space: nowrap; }
.rows.invoice .lbl { padding-top: 5px; }
.rows.colours .lbl { padding-top: 2px; }

.line {
  width: 100%;
  height: 24px;
  margin: 4px 0 0;
  padding: 2px 2px 0;
  border: 0;
  border-bottom: 1px solid #9e9e9e;
  background: none;
  font: 14px/18px "Liberation Sans", Arial, sans-serif;
}
.btn {
  display: flex;
  align-items: center;
  gap: 4px;
  height: 36px;
  margin-top: 5px;
  padding: 0 28px 0 30px;
  border-radius: 2px;
  background: #ab47bc;
  color: #fff;
  font-size: 14px;
  box-shadow: 0 2px 5px rgba(0, 0, 0, .3);
}
.rows.top .btn { margin-top: 4px; }
.btn svg { width: 9px; height: 6px; }

.times { display: flex; align-items: flex-start; padding-top: 4px; gap: 2px; }
.num { display: flex; width: 36px; height: 24px; border-bottom: 1px solid #9e9e9e; }
.num input {
  appearance: textfield;
  width: 18px;
  padding: 0 0 0 2px;
  border: 0;
  background: none;
  font: 16px/20px "Liberation Sans", Arial, sans-serif;
}
.num input::-webkit-inner-spin-button { appearance: none; margin: 0; }
.num svg { width: 18px; height: 18px; margin-top: 2px; }
#tot { padding: 0; }
.times label { padding-top: 2px; font-size: 15px; }

.bic { display: flex; width: 172px; height: 29px; border-bottom: 1px solid #9e9e9e; }
.bic .line { border: 0; }
.bic button { padding: 7px 4px 0 0; }

.drop { position: relative; }
.menu {
  position: absolute;
  z-index: 1;
  top: 41px;
  left: 0;
  width: 122px;
  padding-top: 1px;
  border: 1px solid #c4c4c4;
  background: #fff;
}
.menu button {
  display: flex;
  width: 100%;
  height: 49px;
  padding: 0 28px 2px 8px;
  align-items: center;
  justify-content: space-between;
  font-size: 12px;
}
.menu .chosen { background: #eee; }
.yesno { display: flex; align-items: center; gap: 4px; padding-top: 6px; color: #9e9e9e; font-size: 15px; }
.yesno input { width: 84px; margin: 0 12px 0 4px; }

input[type="color"] {
  appearance: none;
  width: 50px;
  height: 21px;
  margin: 2px 0;
  padding: 0;
  border: 1px solid #000;
}
input[type="color"]::-webkit-color-swatch-wrapper { padding: 0; }
input[type="color"]::-webkit-color-swatch { border: 0; border-radius: 0; }

.thumb {
  position: absolute;
  top: 393px;
  right: 0;
  width: 3px;
  height: 450px;
  background: #858585;
}
```
